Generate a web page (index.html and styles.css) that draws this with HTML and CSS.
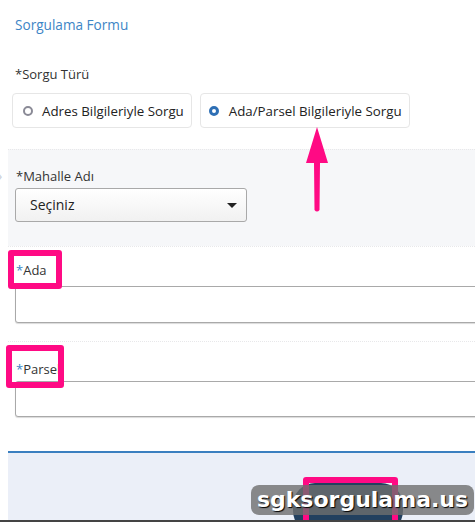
FILE: index.html
```html
<!DOCTYPE html>
<html lang="tr">
<head>
  <meta charset="UTF-8">
  <meta name="viewport" content="width=device-width, initial-scale=1">
  <title>Sorgulama Formu</title>
  <link rel="stylesheet" href="styles.css">
</head>
<body>
  <div class="page">
    <h3 class="form-title">Sorgulama Formu</h3>

    <div class="field">
      <div class="label">*Sorgu Türü</div>
      <div class="radios">
        <label class="radio"><span class="dot"></span>Adres Bilgileriyle Sorgu</label>
        <label class="radio checked"><span class="dot"></span>Ada/Parsel Bilgileriyle Sorgu</label>
      </div>
    </div>

    <div class="group shaded">
      <span class="side-caret">›</span>
      <div class="label">*Mahalle Adı</div>
      <div class="select">Seçiniz<span class="caret"></span></div>
    </div>

    <div class="group">
      <div class="label"><span class="req">*</span>Ada</div>
      <div class="input"></div>
      <span class="mark mark-ada"></span>
    </div>

    <div class="group parsel">
      <div class="label"><span class="req">*</span>Parsel</div>
      <div class="input"></div>
      <span class="mark mark-parsel"></span>
    </div>

    <div class="footer">
      <span class="submit"></span>
      <span class="mark mark-btn"></span>
      <span class="watermark">sgksorgulama.us</span>
    </div>

    <svg class="arrow" width="24" height="86" viewBox="0 0 24 86">
      <path d="M12 0 L23 36 L15 36 L14.5 83 Q12 86 9.5 83 L9 36 L1 36 Z" fill="#ff0a84"/>
    </svg>
  </div>
</body>
</html>
```

FILE: styles.css
```css
body { margin: 0; background: #fff; font-family: "Open Sans", "Noto Sans", sans-serif; color: #333; }
.page { position: relative; width: 475px; height: 522px; overflow: hidden; padding-left: 8px; box-sizing: border-box; border-bottom: 2px solid #444; }

.form-title { margin: 0; padding: 15px 0 0 7px; height: 35px; font-size: 13.6px; font-weight: 400; color: #3d85c6; }

.field { padding: 15px 0 0 0; }
.label { font-size: 13px; padding-left: 7px; line-height: 18px; color: #333; }
.radios { display: flex; gap: 8px; margin: 10px 0 0 4px; }
.radio { display: flex; align-items: center; height: 35px; box-sizing: border-box; border: 1px solid #e6e6e6; border-radius: 4px; padding: 0 7px 0 10px; font-size: 13.3px; color: #222; white-space: nowrap; }
.dot { width: 6px; height: 6px; border: 2px solid #8a8a96; border-radius: 50%; margin-right: 9px; }
.radio.checked { padding-left: 8px; }
.radio.checked .dot { width: 4px; height: 4px; border: 3px solid #2e6fb5; background: #fff; margin-right: 10px; }

.group { position: relative; padding: 14px 0 18px 0; border-top: 1px dotted #e8e8ea; }
.shaded { margin-top: 21px; background: #f6f7f9; padding-top: 17px; padding-bottom: 24px; }
.side-caret { position: absolute; left: -10px; top: 16px; color: #c8cdd6; font-size: 14px; }
.select { position: relative; width: 232px; height: 34px; margin: 3px 0 0 7px; box-sizing: border-box; border: 1px solid #a9a9a9; border-radius: 3px; background: linear-gradient(#fff, #f1f1f1); font-size: 14px; line-height: 32px; padding-left: 14px; color: #222; }
.caret { position: absolute; right: 9px; top: 14px; border-left: 5px solid transparent; border-right: 5px solid transparent; border-top: 5px solid #222; }

.req { color: #3d85c6; }
.group .label { padding-left: 8px; }
.input { width: 600px; height: 37px; margin: 7px 0 0 7px; box-sizing: border-box; border: 1px solid #a9a9a9; border-radius: 3px; box-shadow: 0 1px 1px rgba(0,0,0,0.15); background: #fff; }
.parsel { padding-top: 18px; }
.parsel .input { margin-top: 3px; height: 36px; }

.mark { position: absolute; border: 6px solid #ff0a84; border-radius: 3px; box-sizing: border-box; }
.mark-ada { left: 0; top: 3px; width: 54px; height: 39px; }
.mark-parsel { left: -2px; top: 3px; width: 58px; height: 43px; }

.footer { position: relative; margin-top: 16px; height: 68px; border-top: 2px solid #3a7fc0; background: #ebeff8; }
.submit { position: absolute; left: 285px; top: 30px; width: 110px; height: 50px; border-radius: 22px; background: #22405f; }
.mark-btn { left: 295px; top: 24px; width: 95px; height: 50px; }
.watermark { position: absolute; left: 243px; top: 32px; width: 223px; height: 30px; box-sizing: border-box; border-radius: 8px; background: rgba(110,110,110,0.8); color: #fff; font-family: "DejaVu Sans", sans-serif; font-weight: 700; font-size: 22px; line-height: 29px; text-align: center; text-shadow: 1px 1px 1px #000; }

.arrow { position: absolute; left: 305px; top: 127px; }
```
